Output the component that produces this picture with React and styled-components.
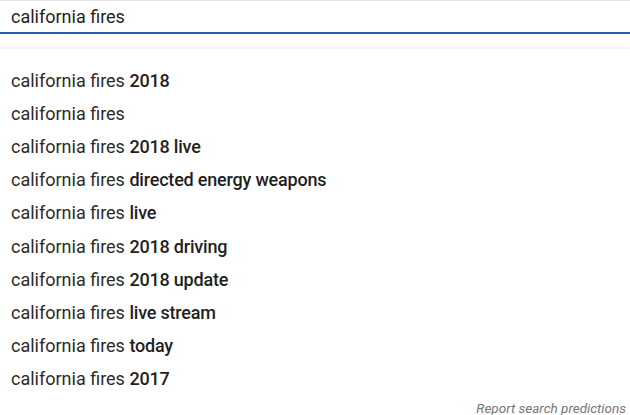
import React from "react";
import styled, { createGlobalStyle } from "styled-components";

const Global = createGlobalStyle`
  html, body {
    margin: 0;
    padding: 0;
    background: #ffffff;
    font-family: Roboto, "Liberation Sans", sans-serif;
  }
`;

const Page = styled.div`
  width: 630px;
  height: 415px;
  overflow: hidden;
  background: #ffffff;
`;

const SearchBox = styled.div`
  height: 31px;
  border-top: 1px solid #e3e3e3;
  border-bottom: 2px solid #1c62b9;
  display: flex;
  align-items: center;
  padding-left: 11px;
  font-size: 18px;
  color: #1f1f1f;
`;

const Gap = styled.div`
  height: 14px;
`;

const Dropdown = styled.div`
  box-shadow: 0 -2px 3px rgba(0, 0, 0, 0.04);
  border-top: 1px solid #f4f4f4;
  padding-top: 15px;
`;

const Row = styled.div`
  height: 33.1px;
  display: flex;
  align-items: center;
  padding-left: 11px;
  font-size: 18px;
  color: #2b2b2b;
`;

const Strong = styled.b`
  font-weight: 500;
  letter-spacing: -0.2px;
  color: #1f1f1f;
`;

const Footer = styled.div`
  display: flex;
  justify-content: flex-end;
  padding: 5px 4px 0 0;
  font-size: 13.5px;
  font-style: italic;
  color: #767676;
`;

const suggestions = [
  "2018",
  "",
  "2018 live",
  "directed energy weapons",
  "live",
  "2018 driving",
  "2018 update",
  "live stream",
  "today",
  "2017",
];

const App = () => (
  <Page>
    <Global />
    <SearchBox>california fires</SearchBox>
    <Gap />
    <Dropdown>
      {suggestions.map((s, i) => (
        <Row key={i}>
          california fires{s && <>&nbsp;<Strong>{s}</Strong></>}
        </Row>
      ))}
      <Footer>Report search predictions</Footer>
    </Dropdown>
  </Page>
);

export default App;
